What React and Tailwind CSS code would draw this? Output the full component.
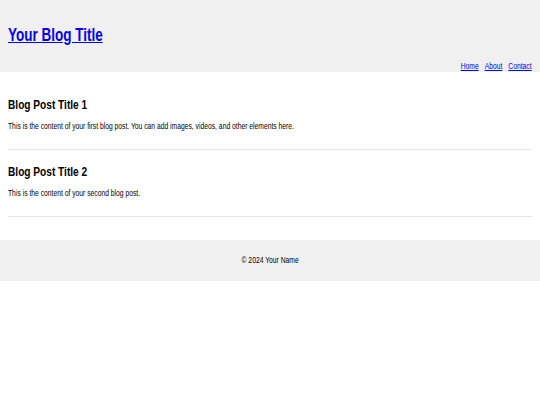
const font = { fontFamily: '"Liberation Sans", Arial, sans-serif' }

// the page reads as a wide layout squeezed horizontally, so text is narrowed in place
function Squish({ children, origin = 'origin-left', className = '' }) {
  return <span className={`inline-block whitespace-nowrap scale-x-75 ${origin} ${className}`}>{children}</span>
}

const posts = [
  { title: 'Blog Post Title 1', body: 'This is the content of your first blog post. You can add images, videos, and other elements here.' },
  { title: 'Blog Post Title 2', body: 'This is the content of your second blog post.' },
]

export default function App() {
  return (
    <div className="min-h-screen bg-white text-black" style={font}>
      <header className="bg-[#f0f0f0] h-[72px] px-2 pt-[25px] flex flex-col">
        <h1 className="text-[18px] leading-[21px] font-bold">
          <a href="#" className="text-[#0000ee]">
            <Squish className="underline">Your Blog Title</Squish>
          </a>
        </h1>
        <nav className="mt-[15px] flex justify-end">
          <Squish origin="origin-right" className="text-[9px] leading-[11px]">
            <span className="flex gap-2">
              <a href="#" className="text-[#0000ee] underline">Home</a>
              <a href="#" className="text-[#0000ee] underline">About</a>
              <a href="#" className="text-[#0000ee] underline">Contact</a>
            </span>
          </Squish>
        </nav>
      </header>

      <main className="px-2 pt-[11.5px] pb-[23.5px]">
        {posts.map(p => (
          <article key={p.title} className="pt-[13.5px] pb-[17px] border-b border-[#e6e6e6]">
            <h2 className="text-[13.5px] leading-[16px] font-bold">
              <Squish>{p.title}</Squish>
            </h2>
            <p className="mt-[8px] text-[9px] leading-[11px]">
              <Squish>{p.body}</Squish>
            </p>
          </article>
        ))}
      </main>

      <footer className="bg-[#f0f0f0] h-[41px] flex items-center justify-center text-[9px] leading-[11px]">
        <Squish origin="origin-center">© 2024 Your Name</Squish>
      </footer>
    </div>
  )
}
